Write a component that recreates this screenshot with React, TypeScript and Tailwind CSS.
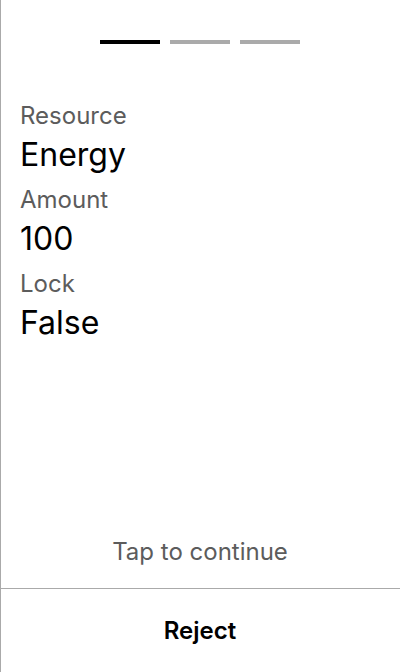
const fields = [
  { label: 'Resource', value: 'Energy' },
  { label: 'Amount', value: '100' },
  { label: 'Lock', value: 'False' },
];

const App = () => {
  return (
    <div
      className="flex flex-col h-[672px] w-[400px] bg-white shadow-[inset_1px_0_0_#aaaaaa]"
      style={{ fontFamily: 'Inter, "Noto Sans", sans-serif' }}
    >
      <div className="flex justify-center gap-2.5 pt-10">
        <div className="h-1 w-[60px] bg-black" />
        <div className="h-1 w-[60px] bg-[#aaaaaa]" />
        <div className="h-1 w-[60px] bg-[#aaaaaa]" />
      </div>
      <div className="flex flex-col px-5 mt-[58px]">
        {fields.map((f) => (
          <div key={f.label} className="flex flex-col">
            <span className="text-2xl leading-7 text-[#5c5c5c]">{f.label}</span>
            <span className="text-[32px] leading-10 text-black mt-[5px] mb-[11px]">{f.value}</span>
          </div>
        ))}
      </div>
      <div className="flex-1" />
      <div className="text-center text-2xl leading-7 text-[#5c5c5c] pb-[22px]">Tap to continue</div>
      <div className="flex h-[84px] items-center justify-center border-t border-[#aaaaaa]">
        <span className="text-2xl leading-7 font-semibold text-black">Reject</span>
      </div>
    </div>
  );
};

export default App;
